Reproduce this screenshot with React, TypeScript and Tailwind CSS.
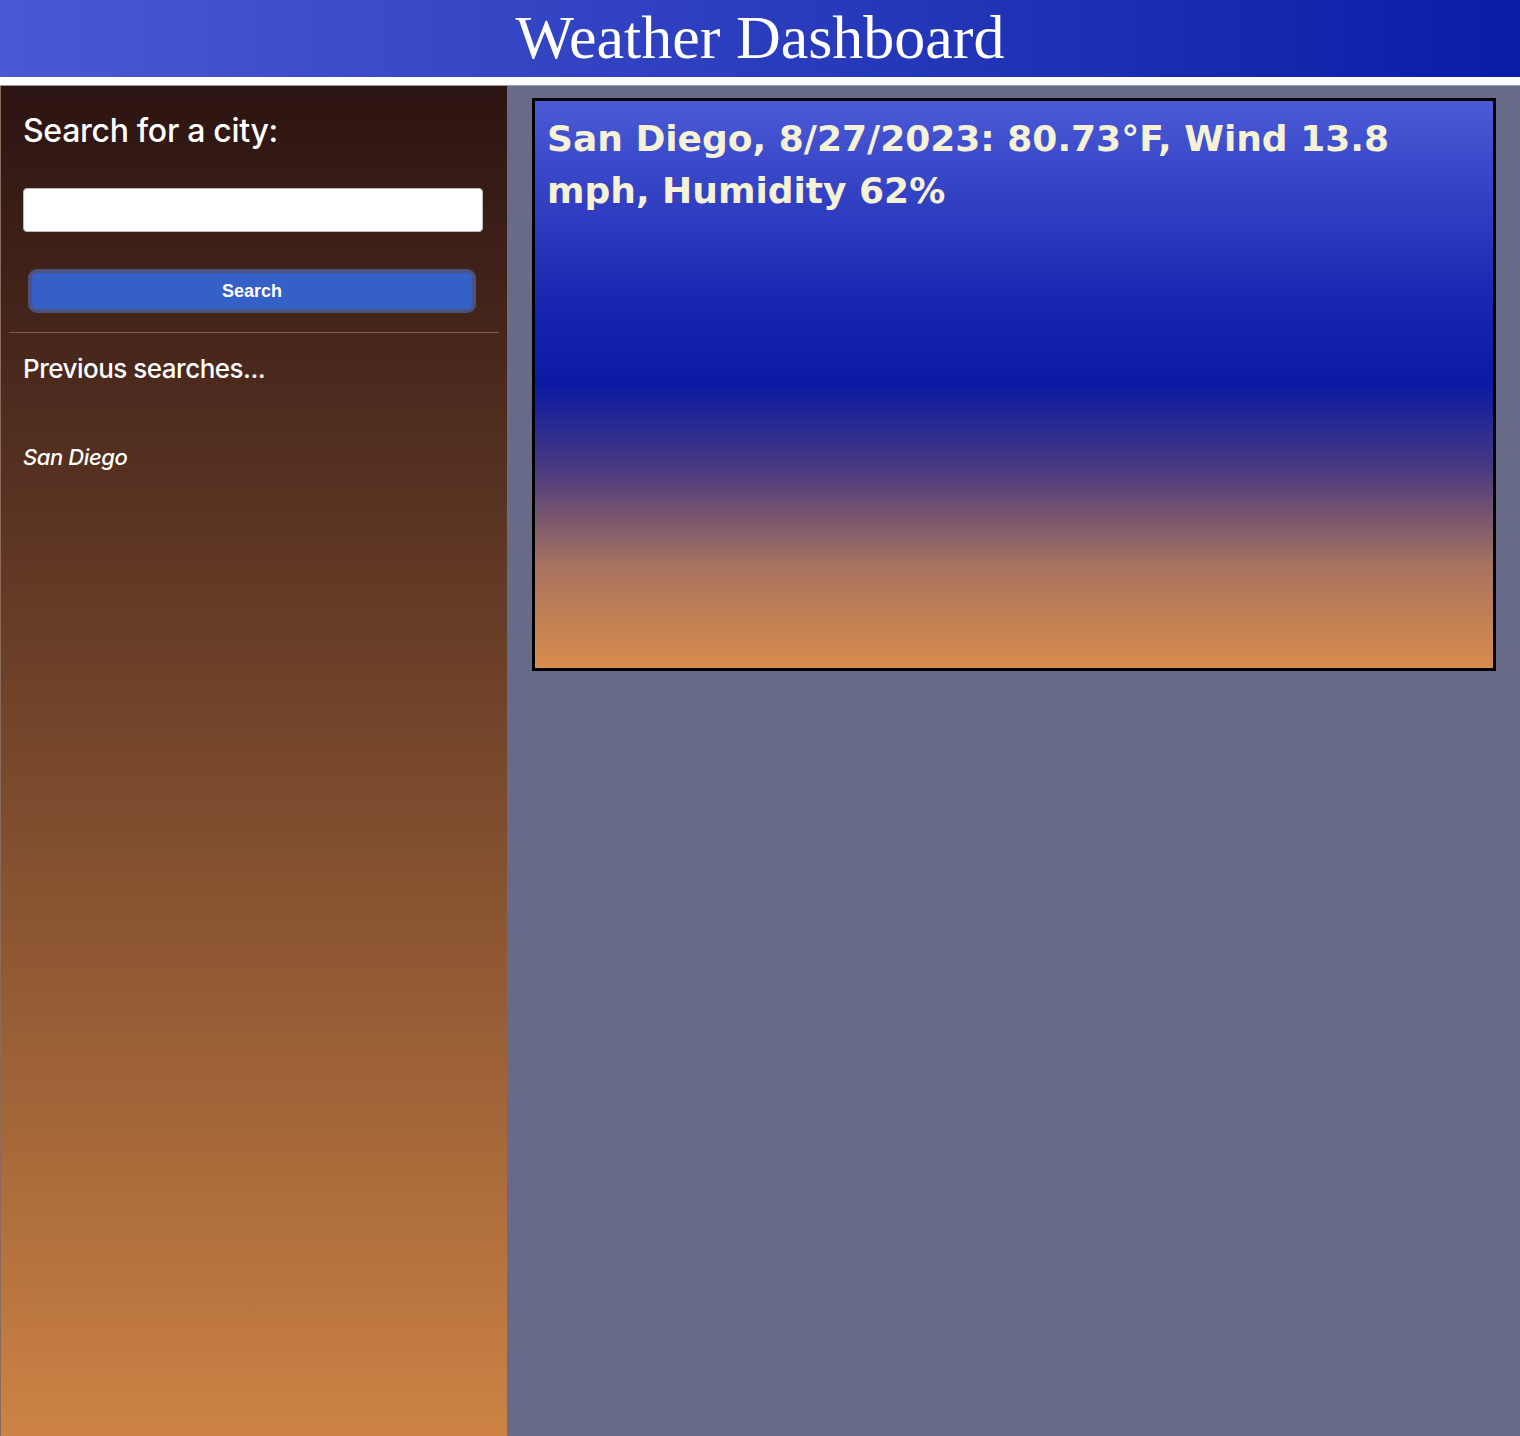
export default function App() {
  const searches = ['San Diego'];

  return (
    <div className="min-h-[1436px] flex flex-col bg-white">
      {/* Header */}
      <header className="h-[77px] bg-gradient-to-r from-[#4b58d4] to-[#0a1ba6] flex items-center justify-center">
        <h1 className="text-white text-[62px] leading-none font-['Liberation_Serif',serif] pb-1">
          Weather Dashboard
        </h1>
      </header>

      <div className="h-[9px] bg-white border-b border-[#9a9aa6]"></div>

      <div className="flex flex-1">
        {/* Sidebar */}
        <aside className="w-[507px] shrink-0 bg-gradient-to-b from-[#2c1412] to-[#cd8345] border-l border-[#8a6a5a] px-2 pt-[25px] font-['Inter',sans-serif] text-white">
          <div className="pl-[14px] pr-[16px]">
            <h2 className="text-[32px] leading-tight font-medium tracking-[-0.3px]">Search for a city:</h2>
            <input
              type="text"
              className="mt-[37px] block w-full h-[44px] rounded-[4px] bg-white border border-[#bbb]"
            />
            <div className="pl-[5px] pr-[7px]">
              <button className="mt-[37px] w-full h-[44px] rounded-[9px] bg-[#3560c8] border-[4px] border-[#4c5380] text-white text-[18px] font-bold font-['Liberation_Sans',sans-serif]">
                Search
              </button>
            </div>
          </div>

          <hr className="mt-[19px] border-t border-[#7e5a48]" />

          <div className="px-[14px]">
            <h3 className="mt-[20px] text-[26px] leading-tight font-medium tracking-[-0.5px]">Previous searches...</h3>
            <ul className="mt-[55px]">
              {searches.map((city) => (
                <li key={city} className="text-[22px] italic font-medium tracking-[-0.4px]">
                  {city}
                </li>
              ))}
            </ul>
          </div>
        </aside>

        {/* Main */}
        <main className="flex-1 bg-[#686b88] pl-[25px] pr-[24px] pt-[12px]">
          <div className="h-[573px] border-[3px] border-black bg-[linear-gradient(to_bottom,#4b5ad6_0%,#1826b0_35%,#0a1aa3_50%,#4a3a80_65%,#a8735f_82%,#d98d4c_100%)] px-[12px] pt-[12px]">
            <p className="text-[#f6f2d8] text-[36px] leading-[52px] font-bold font-['DejaVu_Sans',Verdana,sans-serif]">
              San Diego, 8/27/2023: 80.73°F, Wind 13.8 mph, Humidity 62%
            </p>
          </div>
        </main>
      </div>
    </div>
  );
}
